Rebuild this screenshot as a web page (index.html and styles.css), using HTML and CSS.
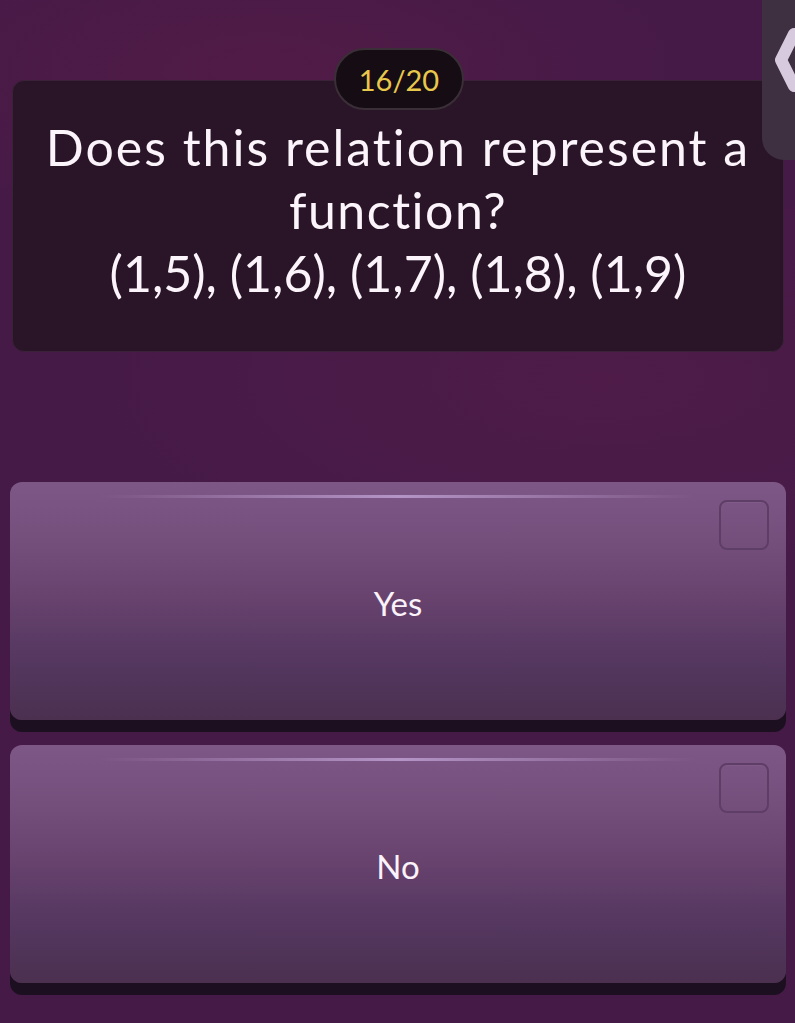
FILE: index.html
```html
<!DOCTYPE html>
<html>
<head>
<meta charset="utf-8">
<link rel="stylesheet" href="styles.css">
</head>
<body>
<div class="page">
  <div class="side-panel">
    <svg class="chev" width="40" height="80" viewBox="0 0 40 80"><polyline points="32,14 19,40 32,66" fill="none" stroke="#d8cade" stroke-width="12" stroke-linecap="round" stroke-linejoin="round"/></svg>
  </div>
  <div class="question">
    <div class="counter">16/20</div>
    <p class="qtext"><span class="wide">Does this relation represent a</span><br><span class="mid">function?</span><br>(1,5), (1,6), (1,7), (1,8), (1,9)</p>
  </div>
  <div class="answers">
    <div class="answer"><span class="check"></span><span class="label">Yes</span></div>
    <div class="answer"><span class="check"></span><span class="label">No</span></div>
  </div>
</div>
</body>
</html>
```
FILE: styles.css
```css
html, body {
  margin: 0;
  padding: 0;
}
body {
  width: 795px;
  height: 1023px;
  overflow: hidden;
  font-family: "Lato", "Noto Sans", sans-serif;
  font-variant-ligatures: none;
  background:
    radial-gradient(ellipse 420px 160px at 260px 70px, rgba(90, 28, 70, 0.55), rgba(90, 28, 70, 0) 100%),
    radial-gradient(ellipse 500px 200px at 600px 380px, rgba(88, 30, 72, 0.45), rgba(88, 30, 72, 0) 100%),
    #461a47;
}
.page {
  position: relative;
  padding-top: 80px;
  height: 1023px;
  box-sizing: border-box;
}
.side-panel {
  position: absolute;
  top: -20px;
  left: 762px;
  width: 60px;
  height: 180px;
  background: #3e3041;
  border-radius: 0 0 0 22px;
  z-index: 2;
}
.chev {
  position: absolute;
  left: 0;
  top: 40px;
}
.question {
  position: relative;
  margin: 0 11px 0 12px;
  height: 272px;
  box-sizing: border-box;
  background: #2a1428;
  border-radius: 12px;
  border: 1px solid #3a2238;
  display: flex;
  align-items: center;
  justify-content: center;
}
.counter {
  position: absolute;
  top: -33px;
  left: 321px;
  width: 130px;
  height: 62px;
  box-sizing: border-box;
  border-radius: 31px;
  background: #160c13;
  border: 2px solid #3b2f37;
  color: #e8c84c;
  font-size: 29px;
  display: flex;
  align-items: center;
  justify-content: center;
}
.qtext {
  margin: -12px 0 0 0;
  color: #fbf4fa;
  font-size: 50px;
  line-height: 63px;
  text-align: center;
}
.wide {
  letter-spacing: 2px;
}
.mid {
  letter-spacing: 1.5px;
}
.answers {
  margin: 130px 9px 0 10px;
  display: flex;
  flex-direction: column;
  gap: 25px;
}
.answer {
  position: relative;
  height: 238px;
  border-radius: 12px;
  background: linear-gradient(180deg, #7d5786 0%, #754f7c 25%, #66426d 50%, #563861 72%, #4b3050 100%);
  box-shadow: 0 12px 0 #1c1020;
  display: flex;
  align-items: center;
  justify-content: center;
}
.answer::before {
  content: "";
  position: absolute;
  top: 13px;
  left: 90px;
  right: 90px;
  height: 3px;
  border-radius: 2px;
  background: linear-gradient(90deg, rgba(180, 150, 200, 0), rgba(190, 160, 210, 0.85) 50%, rgba(180, 150, 200, 0));
}
.check {
  position: absolute;
  top: 18px;
  right: 17px;
  width: 50px;
  height: 50px;
  box-sizing: border-box;
  border-radius: 8px;
  border: 2px solid #5e3e66;
  box-shadow: inset 0 1px 0 rgba(140, 100, 150, 0.4);
}
.label {
  color: #fbf2fa;
  font-size: 33px;
  margin-top: 4px;
}
```
